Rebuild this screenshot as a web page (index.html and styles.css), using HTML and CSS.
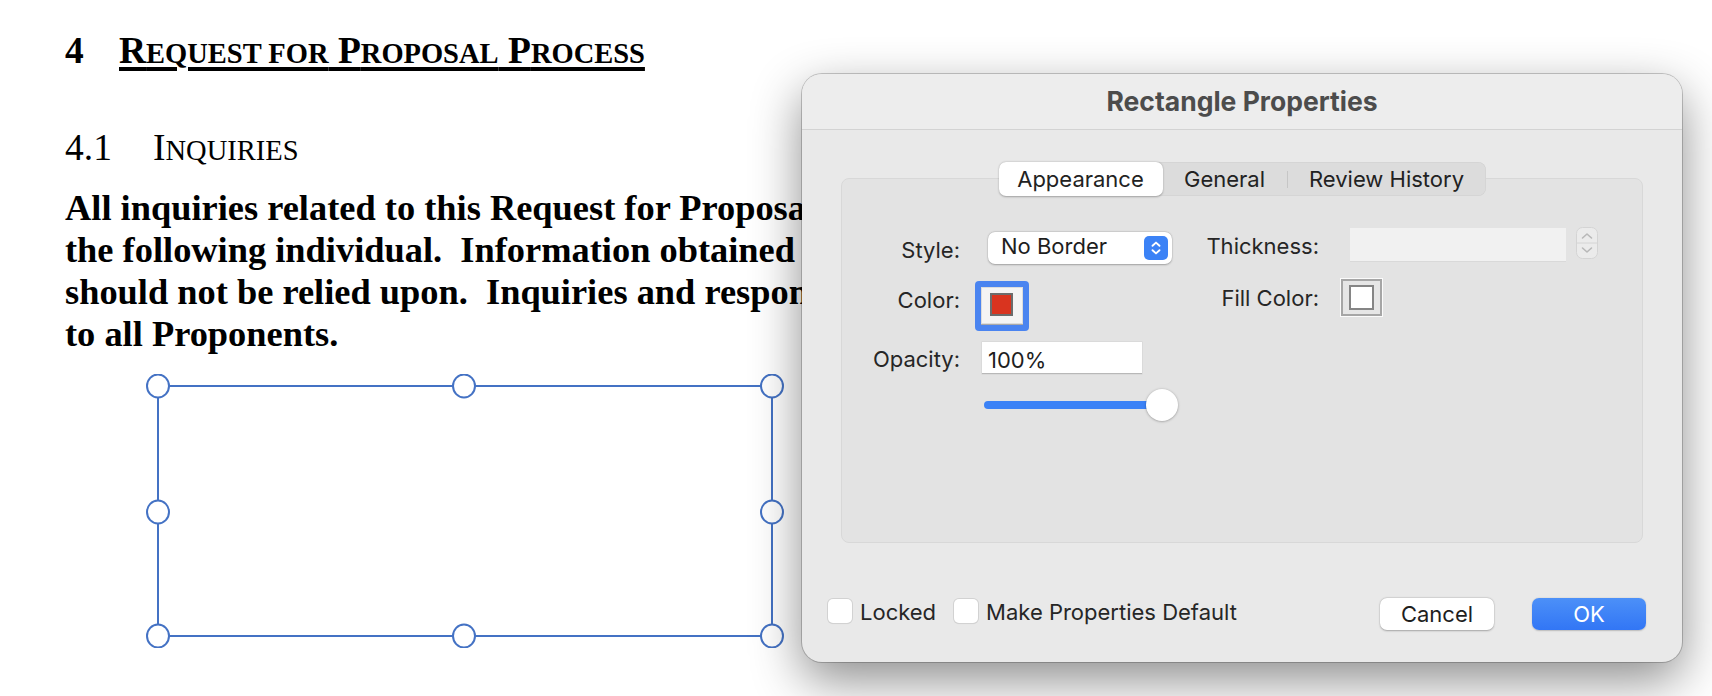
FILE: index.html
```html
<!DOCTYPE html>
<html lang="en">
<head>
<meta charset="utf-8">
<title>Rectangle Properties</title>
<link rel="stylesheet" href="styles.css">
</head>
<body>
<div class="doc">
  <h1 class="h1"><span class="num">4</span><span class="htitle">R<span class="sc">EQUEST FOR</span> P<span class="sc">ROPOSAL</span> P<span class="sc">ROCESS</span></span></h1>
  <h2 class="h2"><span class="num">4.1</span><span>I<span class="sc">NQUIRIES</span></span></h2>
  <p class="para"><span class="line">All inquiries related to this Request for Proposal</span><span class="line">the following individual.  Information obtained</span><span class="line">should not be relied upon.  Inquiries and respon</span><span class="line">to all Proponents.</span></p>
  <svg class="shape" width="638" height="274" viewBox="0 0 638 274">
    <rect x="12" y="12" width="614" height="250" fill="none" stroke="#4472c4" stroke-width="2"/>
    <g fill="#fff" stroke="#4472c4" stroke-width="2">
      <ellipse cx="12" cy="12" rx="11" ry="11.5"/>
      <ellipse cx="318" cy="12" rx="11" ry="11.5"/>
      <ellipse cx="626" cy="12" rx="11" ry="11.5"/>
      <ellipse cx="12" cy="138" rx="11" ry="11.5"/>
      <ellipse cx="626" cy="138" rx="11" ry="11.5"/>
      <ellipse cx="12" cy="262" rx="11" ry="11.5"/>
      <ellipse cx="318" cy="262" rx="11" ry="11.5"/>
      <ellipse cx="626" cy="262" rx="11" ry="11.5"/>
    </g>
  </svg>
</div>

<div class="dialog">
  <div class="titlebar">Rectangle Properties</div>
  <div class="dbody">
    <div class="tabs">
      <div class="tab sel">Appearance</div>
      <div class="tab gen">General</div>
      <div class="tabdiv"></div>
      <div class="tab rev">Review History</div>
    </div>
    <div class="panel">
      <div class="form">
        <div class="lbl l-style">Style:</div>
        <div class="popup"><span>No Border</span>
          <svg class="popicon" width="24" height="24" viewBox="0 0 24 24"><rect width="24" height="24" rx="5" fill="#3b82f6"/><path d="M8.5 9.8 L12 6.6 L15.5 9.8 M8.5 14.2 L12 17.4 L15.5 14.2" fill="none" stroke="#fff" stroke-width="1.9" stroke-linecap="round" stroke-linejoin="round"/></svg>
        </div>
        <div class="lbl l-thick">Thickness:</div>
        <div class="thick">
          <div class="tfield"></div>
          <svg class="stepper" width="22" height="32" viewBox="0 0 22 32"><rect x="0.5" y="0.5" width="21" height="31" rx="6" fill="#ebebeb" stroke="#d4d4d4"/><line x1="1" y1="16" x2="21" y2="16" stroke="#d4d4d4"/><path d="M6.5 11 L11 7 L15.5 11 M6.5 21 L11 25 L15.5 21" fill="none" stroke="#b8b8b8" stroke-width="1.6" stroke-linecap="round" stroke-linejoin="round"/></svg>
        </div>

        <div class="lbl l-color">Color:</div>
        <div class="ring"><div class="well"><div class="swatch"></div></div></div>
        <div class="lbl l-fill">Fill Color:</div>
        <div class="fillwell"><div class="fillinner"><div class="fillswatch"></div></div></div>

        <div class="lbl l-op">Opacity:</div>
        <div class="opfield">100%</div>
        <div></div>
        <div></div>

        <div></div>
        <div class="slider"><div class="track"></div><div class="knob"></div></div>
        <div></div>
        <div></div>
      </div>
    </div>
    <div class="footer">
      <div class="check"><div class="cbox"></div><span class="ctext">Locked</span></div>
      <div class="check check2"><div class="cbox"></div><span class="ctext">Make Properties Default</span></div>
      <div class="btn cancel">Cancel</div>
      <div class="btn ok">OK</div>
    </div>
  </div>
</div>
</body>
</html>
```

FILE: styles.css
```css
* { box-sizing: border-box; }

body {
  margin: 0;
  width: 1712px;
  height: 696px;
  overflow: hidden;
  background: #ffffff;
  position: relative;
}

/* ---------- document ---------- */
.doc {
  padding: 29px 0 0 65px;
  font-family: "Liberation Serif", "Times New Roman", serif;
  color: #000;
}
.h1 {
  margin: 0;
  display: flex;
  font-size: 37.5px;
  line-height: 44px;
  font-weight: 700;
}
.h1 .num { width: 54px; }
.htitle {
  text-decoration: underline;
  text-decoration-thickness: 3.5px;
  text-underline-offset: 4px;
}
.sc { font-size: 0.76em; line-height: 1; }
.h2 {
  margin: 53px 0 0;
  display: flex;
  font-size: 37.5px;
  line-height: 44px;
  font-weight: 400;
}
.h2 .num { width: 88px; }
.para {
  margin: 17.4px 0 0;
  font-size: 36.4px;
  line-height: 42px;
  font-weight: 700;
  white-space: pre;
}
.line { display: block; }
.shape {
  display: block;
  margin: 18.3px 0 0 81px;
}

/* ---------- dialog ---------- */
.dialog {
  position: absolute;
  left: 802px;
  top: 74px;
  width: 880px;
  height: 588px;
  border-radius: 20px;
  background: #e9e9e9;
  box-shadow: 0 0 0 1px rgba(0,0,0,0.2), 0 18px 50px rgba(0,0,0,0.45);
  font-family: Inter, "Noto Sans", sans-serif;
  color: #262626;
  display: flex;
  flex-direction: column;
  overflow: hidden;
}
.titlebar {
  height: 56px;
  padding-top: 12.4px;
  border-bottom: 1px solid #d3d3d3;
  background: #ededed;
  text-align: center;
  font-size: 26.5px;
  line-height: 30px;
  font-weight: 700;
  color: #4c4c4c;
}
.dbody {
  flex: 1;
  display: flex;
  flex-direction: column;
  padding: 32px 39px 0;
}

/* tabs */
.tabs {
  align-self: center;
  display: flex;
  align-items: stretch;
  height: 34px;
  margin-bottom: -18px;
  background: #dcdcdc;
  border-radius: 8px;
  position: relative;
  z-index: 1;
  box-shadow: inset 0 0 0 0.5px rgba(0,0,0,0.06);
}
.tab {
  display: flex;
  align-items: center;
  justify-content: center;
  font-size: 22px;
  line-height: 26px;
  color: #222;
}
.tab.sel {
  width: 164px;
  background: #fff;
  border-radius: 7px;
  box-shadow: 0 0.5px 2px rgba(0,0,0,0.3);
}
.tab.gen { width: 124px; }
.tab.rev { width: 198px; }
.tabdiv {
  width: 1px;
  height: 17px;
  align-self: center;
  background: #c6c6c6;
}

/* panel */
.panel {
  height: 365px;
  border: 1px solid #d8d8d8;
  border-radius: 8px;
  background: #e3e3e3;
  padding-top: 48px;
}
.form {
  display: grid;
  grid-template-columns: 118px 245px 114px 1fr;
  grid-template-rows: 51px 64px 47px 32px;
  align-items: start;
}
.lbl {
  text-align: right;
  font-size: 22px;
  line-height: 26px;
}
.l-style { margin-top: 10px; }
.l-thick { margin-top: 6px; }
.l-color { margin-top: 9.3px; }
.l-fill { margin-top: 7px; }
.l-op { margin-top: 3.7px; }

.popup {
  margin: 5px 0 0 28px;
  width: 184px;
  height: 32px;
  padding: 1px 4px 0 13px;
  display: flex;
  align-items: flex-start;
  background: #fff;
  border-radius: 7px;
  box-shadow: 0 0.5px 2px rgba(0,0,0,0.28), 0 0 0 0.5px rgba(0,0,0,0.06);
  font-size: 22px;
  line-height: 26px;
  color: #1e1e1e;
}
.popicon { margin-left: auto; align-self: center; margin-top: -1px; }

.thick {
  display: flex;
  align-items: flex-start;
  margin-left: 31px;
}
.tfield {
  width: 216px;
  height: 34px;
  margin-top: 1px;
  background: #f1f1f1;
  border-bottom: 1px solid #d9d9d9;
}
.stepper { margin-left: 10px; }

.ring {
  margin: 3px 0 0 15px;
  width: 54px;
  height: 50px;
  padding: 6px;
  background: #4a84f0;
  border-radius: 4px;
}
.well {
  width: 42px;
  height: 38px;
  background: #f4f4f4;
  border-bottom: 1px solid #a9a9a9;
  box-shadow: inset 0 0 0 1px #dcdcdc;
  padding: 6px 0 0 9px;
}
.swatch {
  width: 23px;
  height: 23px;
  background: #d9341f;
  border: 2px solid #6c6c6c;
}

.fillwell {
  margin-left: 21px;
  width: 43px;
  height: 39px;
  border: 1px solid #fbfbfb;
}
.fillinner {
  width: 41px;
  height: 37px;
  border: 2px solid #a6a6a6;
  background: #e6e6e6;
  padding: 4px 0 0 6px;
}
.fillswatch {
  width: 25px;
  height: 25px;
  background: #fff;
  border: 2px solid #858585;
}

.opfield {
  margin-left: 22px;
  width: 160px;
  height: 32px;
  padding: 5px 0 0 6px;
  background: #fff;
  border-bottom: 1px solid #b8b8b8;
  box-shadow: 0 0 0 0.5px rgba(0,0,0,0.08);
  font-size: 22px;
  line-height: 26px;
  color: #1e1e1e;
}

.slider {
  margin-left: 24px;
  height: 32px;
  display: flex;
  align-items: center;
}
.track {
  width: 178px;
  height: 8px;
  border-radius: 4px;
  background: #3b82f6;
}
.knob {
  width: 32px;
  height: 32px;
  margin-left: -16px;
  border-radius: 50%;
  background: #fff;
  box-shadow: 0 0.5px 2.5px rgba(0,0,0,0.35);
}

/* footer */
.footer {
  display: flex;
  align-items: flex-start;
  margin: 55px -3px 0 -13px;
  height: 32px;
}
.check {
  display: flex;
  align-items: flex-start;
}
.check2 { margin-left: 18px; }
.cbox {
  width: 24px;
  height: 24px;
  margin-top: 1px;
  background: #fff;
  border-radius: 5px;
  box-shadow: 0 0 0 1px #d2d2d2, 0 0.5px 1px rgba(0,0,0,0.1);
}
.ctext {
  margin: 1px 0 0 8px;
  font-size: 22px;
  line-height: 26px;
}
.btn {
  width: 114px;
  height: 32px;
  border-radius: 7px;
  display: flex;
  align-items: center;
  justify-content: center;
  font-size: 22px;
  line-height: 26px;
}
.cancel {
  margin-left: auto;
  background: #fff;
  color: #1e1e1e;
  box-shadow: 0 0.5px 2px rgba(0,0,0,0.28), 0 0 0 0.5px rgba(0,0,0,0.06);
}
.ok {
  margin-left: 38px;
  background: linear-gradient(#4c90f8, #3276f5);
  color: #fff;
  box-shadow: 0 0.5px 1.5px rgba(0,0,0,0.2);
}
```
